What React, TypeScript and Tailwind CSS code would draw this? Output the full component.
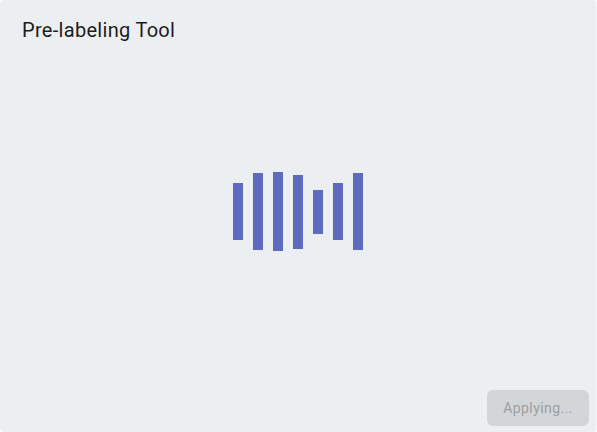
const bars = [57, 77, 79, 74, 44, 57, 77];

export default function App() {
  return (
    <div className="w-[597px] h-[432px] bg-white font-['Roboto',sans-serif]">
      <div className="w-full h-full bg-[#eceff1] rounded-[4px] border-r border-[#f5f7f8] flex flex-col">
        <div className="pl-[22px] pt-[17px] text-[20px] leading-[26px] text-[#1c1c1c] tracking-[0.3px]">
          Pre-labeling Tool
        </div>
        <div className="flex-1 flex items-center justify-center gap-[10px] pb-[10px]">
          {bars.map((h, i) => (
            <div key={i} className="w-[10px] bg-[#5c6bc0]" style={{ height: h }} />
          ))}
        </div>
        <div className="flex justify-end pr-[7px] pb-[6px]">
          <button className="w-[102px] h-[36px] rounded-[6px] bg-[#d3d6d8] text-[#9e9e9e] text-[14px] tracking-[0.4px]">
            Applying...
          </button>
        </div>
      </div>
    </div>
  );
}
